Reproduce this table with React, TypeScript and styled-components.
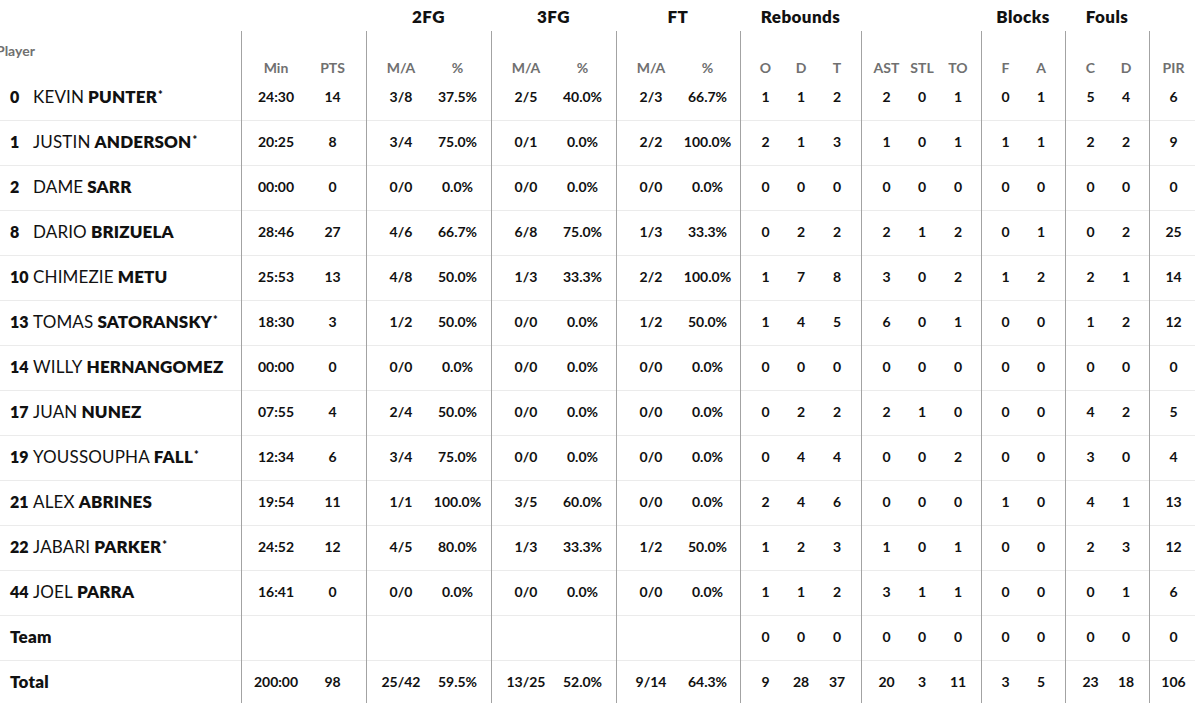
import React from "react";
import styled, { createGlobalStyle } from "styled-components";

const Global = createGlobalStyle`
  html, body { margin: 0; padding: 0; background: #fff; }
  body { font-family: Lato, "Noto Sans", sans-serif; color: #111; overflow: hidden; }
`;

type Col = { key: string; label: string; w: number; pl: number; pr: number; start?: boolean };

const COLS: Col[] = [
  { key: "min", label: "Min", w: 63, pl: 6, pr: 0, start: true },
  { key: "pts", label: "PTS", w: 62, pl: 0, pr: 5 },
  { key: "fg2m", label: "M/A", w: 63, pl: 6, pr: 0, start: true },
  { key: "fg2p", label: "%", w: 62, pl: 0, pr: 5 },
  { key: "fg3m", label: "M/A", w: 63, pl: 6, pr: 0, start: true },
  { key: "fg3p", label: "%", w: 62, pl: 0, pr: 5 },
  { key: "ftm", label: "M/A", w: 63, pl: 6, pr: 0, start: true },
  { key: "ftp", label: "%", w: 61, pl: 0, pr: 4 },
  { key: "ro", label: "O", w: 43, pl: 7, pr: 0, start: true },
  { key: "rd", label: "D", w: 36, pl: 0, pr: 0 },
  { key: "rt", label: "T", w: 42, pl: 0, pr: 6 },
  { key: "ast", label: "AST", w: 43, pl: 7, pr: 0, start: true },
  { key: "stl", label: "STL", w: 36, pl: 0, pr: 0 },
  { key: "to", label: "TO", w: 41, pl: 0, pr: 5 },
  { key: "bf", label: "F", w: 42, pl: 6, pr: 0, start: true },
  { key: "ba", label: "A", w: 42, pl: 0, pr: 6 },
  { key: "fc", label: "C", w: 43, pl: 7, pr: 0, start: true },
  { key: "fd", label: "D", w: 41, pl: 0, pr: 5 },
  { key: "pir", label: "PIR", w: 46, pl: 6, pr: 4, start: true },
];

const TEMPLATE = `241px ${COLS.map((c) => c.w + "px").join(" ")}`;

const GROUPS: { label: string; w: number }[] = [
  { label: "", w: 241 },
  { label: "", w: 125 },
  { label: "2FG", w: 125 },
  { label: "3FG", w: 125 },
  { label: "FT", w: 124 },
  { label: "Rebounds", w: 121 },
  { label: "", w: 120 },
  { label: "Blocks", w: 84 },
  { label: "Fouls", w: 84 },
  { label: "", w: 46 },
];

type P = { no?: string; first?: string; last?: string; star?: boolean; label?: string; v: string[] };

const ROWS: P[] = [
  { no: "0", first: "KEVIN", last: "PUNTER", star: true, v: ["24:30", "14", "3/8", "37.5%", "2/5", "40.0%", "2/3", "66.7%", "1", "1", "2", "2", "0", "1", "0", "1", "5", "4", "6"] },
  { no: "1", first: "JUSTIN", last: "ANDERSON", star: true, v: ["20:25", "8", "3/4", "75.0%", "0/1", "0.0%", "2/2", "100.0%", "2", "1", "3", "1", "0", "1", "1", "1", "2", "2", "9"] },
  { no: "2", first: "DAME", last: "SARR", v: ["00:00", "0", "0/0", "0.0%", "0/0", "0.0%", "0/0", "0.0%", "0", "0", "0", "0", "0", "0", "0", "0", "0", "0", "0"] },
  { no: "8", first: "DARIO", last: "BRIZUELA", v: ["28:46", "27", "4/6", "66.7%", "6/8", "75.0%", "1/3", "33.3%", "0", "2", "2", "2", "1", "2", "0", "1", "0", "2", "25"] },
  { no: "10", first: "CHIMEZIE", last: "METU", v: ["25:53", "13", "4/8", "50.0%", "1/3", "33.3%", "2/2", "100.0%", "1", "7", "8", "3", "0", "2", "1", "2", "2", "1", "14"] },
  { no: "13", first: "TOMAS", last: "SATORANSKY", star: true, v: ["18:30", "3", "1/2", "50.0%", "0/0", "0.0%", "1/2", "50.0%", "1", "4", "5", "6", "0", "1", "0", "0", "1", "2", "12"] },
  { no: "14", first: "WILLY", last: "HERNANGOMEZ", v: ["00:00", "0", "0/0", "0.0%", "0/0", "0.0%", "0/0", "0.0%", "0", "0", "0", "0", "0", "0", "0", "0", "0", "0", "0"] },
  { no: "17", first: "JUAN", last: "NUNEZ", v: ["07:55", "4", "2/4", "50.0%", "0/0", "0.0%", "0/0", "0.0%", "0", "2", "2", "2", "1", "0", "0", "0", "4", "2", "5"] },
  { no: "19", first: "YOUSSOUPHA", last: "FALL", star: true, v: ["12:34", "6", "3/4", "75.0%", "0/0", "0.0%", "0/0", "0.0%", "0", "4", "4", "0", "0", "2", "0", "0", "3", "0", "4"] },
  { no: "21", first: "ALEX", last: "ABRINES", v: ["19:54", "11", "1/1", "100.0%", "3/5", "60.0%", "0/0", "0.0%", "2", "4", "6", "0", "0", "0", "1", "0", "4", "1", "13"] },
  { no: "22", first: "JABARI", last: "PARKER", star: true, v: ["24:52", "12", "4/5", "80.0%", "1/3", "33.3%", "1/2", "50.0%", "1", "2", "3", "1", "0", "1", "0", "0", "2", "3", "12"] },
  { no: "44", first: "JOEL", last: "PARRA", v: ["16:41", "0", "0/0", "0.0%", "0/0", "0.0%", "0/0", "0.0%", "1", "1", "2", "3", "1", "1", "0", "0", "0", "1", "6"] },
  { label: "Team", v: ["", "", "", "", "", "", "", "", "0", "0", "0", "0", "0", "0", "0", "0", "0", "0", "0"] },
  { label: "Total", v: ["200:00", "98", "25/42", "59.5%", "13/25", "52.0%", "9/14", "64.3%", "9", "28", "37", "20", "3", "11", "3", "5", "23", "18", "106"] },
];

const Table = styled.div`
  width: 1195px;
  display: flex;
  flex-direction: column;
`;

const GroupRow = styled.div`
  display: flex;
  height: 31px;
`;

const GroupCell = styled.div<{ $w: number }>`
  width: ${(p) => p.$w}px;
  flex: none;
  display: flex;
  align-items: center;
  justify-content: center;
  padding-top: 2px;
  box-sizing: border-box;
  font-size: 17px;
  font-weight: 800;
  letter-spacing: 0.4px;
  color: #111;
  white-space: nowrap;
`;

const HeadRow = styled.div`
  display: grid;
  grid-template-columns: ${TEMPLATE};
  height: 45px;
`;

const Row = styled.div`
  display: grid;
  grid-template-columns: ${TEMPLATE};
  height: 45px;
  box-sizing: border-box;
  border-bottom: 1px solid #ebebeb;
`;

const Cell = styled.div<{ $pl: number; $pr: number; $start?: boolean }>`
  box-sizing: border-box;
  padding-left: ${(p) => p.$pl}px;
  padding-right: ${(p) => p.$pr}px;
  padding-bottom: 4px;
  border-left: ${(p) => (p.$start ? "1px solid #a3a3a3" : "none")};
  display: flex;
  align-items: center;
  justify-content: center;
  font-size: 14px;
  font-weight: 700;
  color: #111;
  white-space: nowrap;
  margin-bottom: -1px;
`;

const HeadCell = styled(Cell)`
  align-items: flex-end;
  padding-bottom: 0;
  color: #707070;
  margin-bottom: 0;
  span { line-height: 17px; }
`;

const PlayerHead = styled.div`
  display: flex;
  align-items: flex-start;
  padding-top: 11px;
  margin-left: -4px;
  font-size: 14px;
  font-weight: 700;
  color: #707070;
`;

const PlayerCell = styled.div`
  display: flex;
  align-items: center;
  padding-left: 10px;
  padding-bottom: 3px;
  font-size: 17px;
  letter-spacing: 0.15px;
  color: #111;
  white-space: nowrap;
`;

const Num = styled.span`
  display: inline-block;
  min-width: 19px;
  margin-right: 4px;
  font-weight: 800;
  font-size: 16px;
  letter-spacing: 0;
`;

const First = styled.span`
  font-weight: 400;
  margin-right: 4px;
`;

const Last = styled.span`
  font-weight: 800;
`;

const Star = styled.sup`
  font-size: 11px;
  font-weight: 800;
  position: relative;
  top: -2px;
  margin-left: 1px;
  vertical-align: top;
  line-height: 1;
`;

const Label = styled.span`
  font-weight: 800;
  font-size: 17px;
  letter-spacing: 0.2px;
`;

export default function App() {
  return (
    <>
      <Global />
      <Table>
        <GroupRow>
          {GROUPS.map((g, i) => (
            <GroupCell key={i} $w={g.w}>
              {g.label}
            </GroupCell>
          ))}
        </GroupRow>
        <HeadRow>
          <PlayerHead>Player</PlayerHead>
          {COLS.map((c) => (
            <HeadCell key={c.key} $pl={c.pl} $pr={c.pr} $start={c.start}>
              <span>{c.label}</span>
            </HeadCell>
          ))}
        </HeadRow>
        {ROWS.map((r, i) => (
          <Row key={i}>
            <PlayerCell>
              {r.label ? (
                <Label>{r.label}</Label>
              ) : (
                <>
                  <Num>{r.no}</Num>
                  <First>{r.first}</First>
                  <Last>{r.last}</Last>
                  {r.star && <Star>*</Star>}
                </>
              )}
            </PlayerCell>
            {COLS.map((c, j) => (
              <Cell key={c.key} $pl={c.pl} $pr={c.pr} $start={c.start}>
                {r.v[j]}
              </Cell>
            ))}
          </Row>
        ))}
      </Table>
    </>
  );
}
